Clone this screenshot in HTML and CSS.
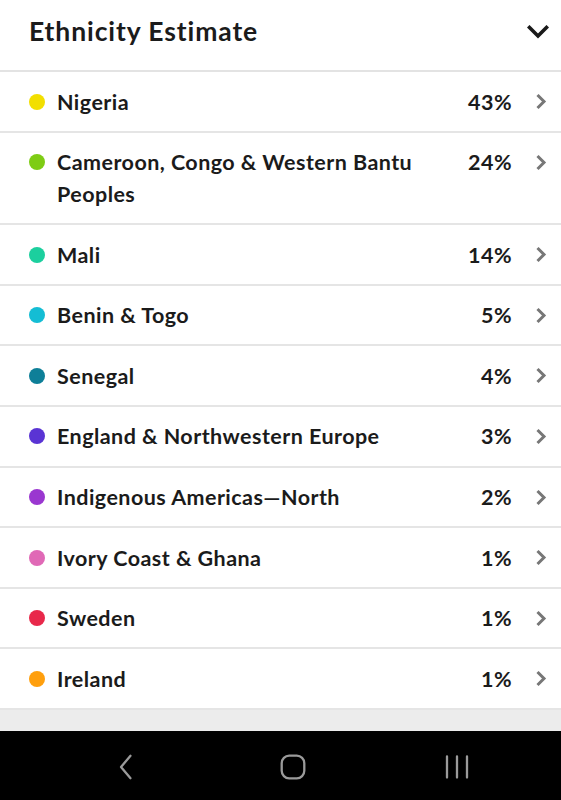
FILE: index.html
```html
<!DOCTYPE html>
<html>
<head>
<meta charset="utf-8">
<link rel="stylesheet" href="styles.css">
</head>
<body>
<div class="header">
  <h1 class="title">Ethnicity Estimate</h1>
  <svg class="chev-down" width="22" height="14" viewBox="0 0 22 14"><path d="M2.5 2.5 L11 11 L19.5 2.5" fill="none" stroke="#1a1a1a" stroke-width="3.6" stroke-linecap="square"/></svg>
</div>
<ul class="list">
  <li class="row"><span class="dot c1"></span><span class="name">Nigeria</span><span class="pct">43%</span><svg class="chev" width="12" height="17" viewBox="0 0 12 17"><path d="M2.5 2 L9 8.5 L2.5 15" fill="none" stroke="#777" stroke-width="3"/></svg></li>
  <li class="row"><span class="dot c2"></span><span class="name">Cameroon, Congo &amp; Western Bantu Peoples</span><span class="pct">24%</span><svg class="chev" width="12" height="17" viewBox="0 0 12 17"><path d="M2.5 2 L9 8.5 L2.5 15" fill="none" stroke="#777" stroke-width="3"/></svg></li>
  <li class="row"><span class="dot c3"></span><span class="name">Mali</span><span class="pct">14%</span><svg class="chev" width="12" height="17" viewBox="0 0 12 17"><path d="M2.5 2 L9 8.5 L2.5 15" fill="none" stroke="#777" stroke-width="3"/></svg></li>
  <li class="row"><span class="dot c4"></span><span class="name">Benin &amp; Togo</span><span class="pct">5%</span><svg class="chev" width="12" height="17" viewBox="0 0 12 17"><path d="M2.5 2 L9 8.5 L2.5 15" fill="none" stroke="#777" stroke-width="3"/></svg></li>
  <li class="row"><span class="dot c5"></span><span class="name">Senegal</span><span class="pct">4%</span><svg class="chev" width="12" height="17" viewBox="0 0 12 17"><path d="M2.5 2 L9 8.5 L2.5 15" fill="none" stroke="#777" stroke-width="3"/></svg></li>
  <li class="row"><span class="dot c6"></span><span class="name">England &amp; Northwestern Europe</span><span class="pct">3%</span><svg class="chev" width="12" height="17" viewBox="0 0 12 17"><path d="M2.5 2 L9 8.5 L2.5 15" fill="none" stroke="#777" stroke-width="3"/></svg></li>
  <li class="row"><span class="dot c7"></span><span class="name">Indigenous Americas—North</span><span class="pct">2%</span><svg class="chev" width="12" height="17" viewBox="0 0 12 17"><path d="M2.5 2 L9 8.5 L2.5 15" fill="none" stroke="#777" stroke-width="3"/></svg></li>
  <li class="row"><span class="dot c8"></span><span class="name">Ivory Coast &amp; Ghana</span><span class="pct">1%</span><svg class="chev" width="12" height="17" viewBox="0 0 12 17"><path d="M2.5 2 L9 8.5 L2.5 15" fill="none" stroke="#777" stroke-width="3"/></svg></li>
  <li class="row"><span class="dot c9"></span><span class="name">Sweden</span><span class="pct">1%</span><svg class="chev" width="12" height="17" viewBox="0 0 12 17"><path d="M2.5 2 L9 8.5 L2.5 15" fill="none" stroke="#777" stroke-width="3"/></svg></li>
  <li class="row"><span class="dot c10"></span><span class="name">Ireland</span><span class="pct">1%</span><svg class="chev" width="12" height="17" viewBox="0 0 12 17"><path d="M2.5 2 L9 8.5 L2.5 15" fill="none" stroke="#777" stroke-width="3"/></svg></li>
  <li class="row row-pressed"><span class="dot c1"></span><span class="name"></span><span class="pct">1%</span><svg class="chev" width="12" height="17" viewBox="0 0 12 17"><path d="M2.5 2 L9 8.5 L2.5 15" fill="none" stroke="#777" stroke-width="3"/></svg></li>
</ul>
<nav class="navbar">
  <svg class="nav-ico" width="26" height="26" viewBox="0 0 26 26"><path d="M13.5 1.8 L4 13 L13.5 24.2" fill="none" stroke="#9a9a9a" stroke-width="2.3" stroke-linecap="round" stroke-linejoin="round"/></svg>
  <svg class="nav-ico" width="26" height="26" viewBox="0 0 26 26"><rect x="1.7" y="1.7" width="22.6" height="22.6" rx="7.5" fill="none" stroke="#9a9a9a" stroke-width="2.3"/></svg>
  <svg class="nav-ico" width="26" height="26" viewBox="0 0 26 26"><path d="M3 2.5 V23.5 M13 2.5 V23.5 M23 2.5 V23.5" fill="none" stroke="#9a9a9a" stroke-width="2.3" stroke-linecap="round"/></svg>
</nav>
</body>
</html>
```
FILE: styles.css
```css
html, body {
  margin: 0;
  padding: 0;
  background: #ffffff;
}
body {
  font-family: "Lato", "Source Sans Pro", "Noto Sans", sans-serif;
  color: #1b1b1b;
  width: 561px;
  height: 800px;
  overflow: hidden;
}
.header {
  height: 72px;
  box-sizing: border-box;
  display: flex;
  align-items: center;
  justify-content: space-between;
  padding: 0 12px 8px 29px;
  border-bottom: 2px solid #e3e3e3;
}
.title {
  margin: 0;
  font-size: 26.5px;
  font-weight: 700;
  letter-spacing: 0.9px;
  line-height: 32px;
}
.chev-down {
  display: block;
  margin-top: 2px;
}
.list {
  list-style: none;
  margin: 0;
  padding: 0;
}
.row {
  display: flex;
  align-items: flex-start;
  padding: 13.5px 14px 13.1px 29px;
  border-bottom: 2px solid #e5e5e5;
  font-size: 21.5px;
  font-weight: 700;
  letter-spacing: 0.45px;
  line-height: 32px;
}
.row-pressed {
  background: #ececec;
}
.dot {
  width: 16px;
  height: 16px;
  border-radius: 50%;
  flex: none;
  margin-top: 8px;
  margin-right: 12px;
}
.name {
  flex: 1;
  padding-right: 20px;
}
.pct {
  flex: none;
  text-align: right;
}
.chev {
  flex: none;
  margin-left: 23px;
  margin-top: 7.5px;
  display: block;
}
.c1 { background: #f2df00; }
.c2 { background: #7ecc14; }
.c3 { background: #1ccf9e; }
.c4 { background: #14bdd4; }
.c5 { background: #0e7f98; }
.c6 { background: #5a34d4; }
.c7 { background: #9a37d0; }
.c8 { background: #e069b6; }
.c9 { background: #e8284a; }
.c10 { background: #ff9f0d; }
.navbar {
  position: fixed;
  left: 0;
  right: 0;
  bottom: 0;
  height: 69px;
  background: #000000;
  display: grid;
  grid-template-columns: repeat(3, 1fr);
  justify-items: center;
  align-items: center;
  padding: 0 22px 0 48px;
}
.nav-ico {
  display: block;
  margin-top: 2px;
}
```
